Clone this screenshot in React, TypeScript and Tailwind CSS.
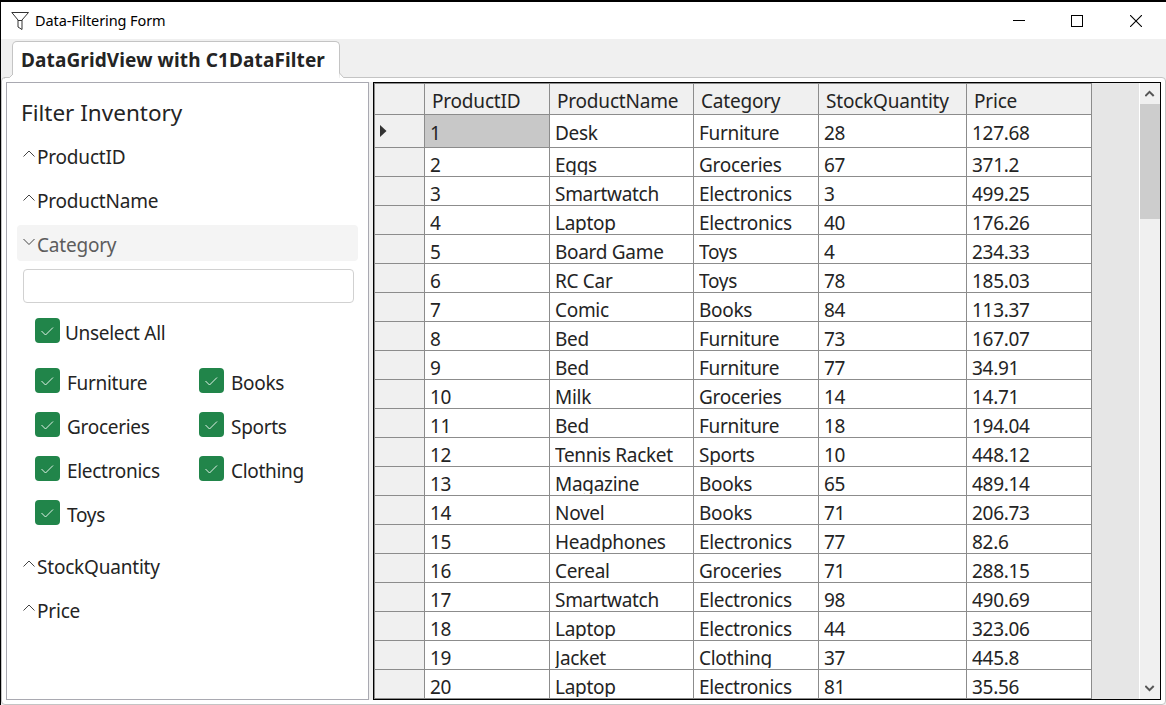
import clsx from 'clsx';

const columns = [
  { name: 'ProductID', width: 'w-[125px]' },
  { name: 'ProductName', width: 'w-[144px]' },
  { name: 'Category', width: 'w-[125px]' },
  { name: 'StockQuantity', width: 'w-[148px]' },
  { name: 'Price', width: 'w-[125px]' },
];

const products = [
  ['1', 'Desk', 'Furniture', '28', '127.68'],
  ['2', 'Eggs', 'Groceries', '67', '371.2'],
  ['3', 'Smartwatch', 'Electronics', '3', '499.25'],
  ['4', 'Laptop', 'Electronics', '40', '176.26'],
  ['5', 'Board Game', 'Toys', '4', '234.33'],
  ['6', 'RC Car', 'Toys', '78', '185.03'],
  ['7', 'Comic', 'Books', '84', '113.37'],
  ['8', 'Bed', 'Furniture', '73', '167.07'],
  ['9', 'Bed', 'Furniture', '77', '34.91'],
  ['10', 'Milk', 'Groceries', '14', '14.71'],
  ['11', 'Bed', 'Furniture', '18', '194.04'],
  ['12', 'Tennis Racket', 'Sports', '10', '448.12'],
  ['13', 'Magazine', 'Books', '65', '489.14'],
  ['14', 'Novel', 'Books', '71', '206.73'],
  ['15', 'Headphones', 'Electronics', '77', '82.6'],
  ['16', 'Cereal', 'Groceries', '71', '288.15'],
  ['17', 'Smartwatch', 'Electronics', '98', '490.69'],
  ['18', 'Laptop', 'Electronics', '44', '323.06'],
  ['19', 'Jacket', 'Clothing', '37', '445.8'],
  ['20', 'Laptop', 'Electronics', '81', '35.56'],
];

const categories = ['Furniture', 'Books', 'Groceries', 'Sports', 'Electronics', 'Clothing', 'Toys'];

function TitleBar() {
  return (
    <header className="flex h-[37px] shrink-0 items-center bg-white pl-[10px] text-black">
      <svg width="20" height="20" viewBox="0 0 20 20" fill="none" stroke="#333">
        <path d="M0.8 1.5H17.5L11 9V18.5L7 16V9Z" />
        <path d="M7 9.5H11" />
      </svg>
      <h1 className="ml-[4px] flex-1 text-[14.5px] tracking-[-0.1px]">Data-Filtering Form</h1>
      <svg width="12" height="12" viewBox="0 0 12 12" stroke="#000" shapeRendering="crispEdges">
        <path d="M0 5.5H12" />
      </svg>
      <svg className="ml-[46px]" width="12" height="12" viewBox="0 0 12 12" fill="none" stroke="#000" shapeRendering="crispEdges">
        <path d="M0.5 0.5H11.5V11.5H0.5Z" />
      </svg>
      <svg className="mr-[24px] ml-[47px]" width="12" height="12" viewBox="0 0 12 12" stroke="#000" strokeWidth="1.1">
        <path d="M0 0L12 12M12 0L0 12" />
      </svg>
    </header>
  );
}

function Chevron({ open }: { open?: boolean }) {
  return (
    <svg className="-mt-[3px]" width="12" height="8" viewBox="0 0 12 8" fill="none" stroke="#444">
      <path d={open ? 'M0.5 1L6 6.5L11.5 1' : 'M0.5 6.5L6 1L11.5 6.5'} />
    </svg>
  );
}

function FilterHeader({ label, open }: { label: string; open?: boolean }) {
  return (
    <div
      className={clsx(
        'flex h-9 items-center gap-[2px] rounded pl-[6px]',
        open ? 'bg-[#f4f4f4] text-[#5c5c5c]' : 'text-[#242424]',
      )}
    >
      <Chevron open={open} />
      <span className="pt-[4px] leading-[34px] tracking-[-0.2px]">{label}</span>
    </div>
  );
}

function Checkbox({ label, className }: { label: string; className?: string }) {
  return (
    <label className={clsx('flex h-[25px]', className)}>
      <span className="flex h-[25px] w-[25px] shrink-0 items-center justify-center rounded-[4px] bg-[#21854a]">
        <svg width="25" height="25" viewBox="0 0 25 25" fill="none" stroke="#e4f2e9">
          <path d="M6.5 13L10.5 17L18 9.5" />
        </svg>
      </span>
      <span className="pt-[3px] leading-[25px]">{label}</span>
    </label>
  );
}

function FilterPanel() {
  return (
    <aside className="w-[363px] shrink-0 border border-[#a9a9b1] bg-white px-[10px]">
      <h2 className="h-[54px] pt-[14px] pl-[4px] text-[22.5px] leading-[32px] tracking-[0px]">Filter Inventory</h2>
      <div className="flex flex-col gap-2">
        <FilterHeader label="ProductID" />
        <FilterHeader label="ProductName" />
        <FilterHeader label="Category" open />
        <div className="h-[270px] pr-[4px] pl-[6px]">
          <input className="block h-[34px] w-full rounded border border-[#d1d1d1] bg-white" />
          <Checkbox label="Unselect All" className="mt-[15px] ml-[12px] gap-[5px]" />
          <div className="mt-[25px] ml-[12px] grid grid-cols-[164px_1fr] gap-y-[19px]">
            {categories.map((category) => (
              <Checkbox key={category} label={category} className="gap-[7px]" />
            ))}
          </div>
        </div>
        <FilterHeader label="StockQuantity" />
        <FilterHeader label="Price" />
      </div>
    </aside>
  );
}

function Grid() {
  return (
    <div className="w-[718px] border-t border-l border-[#8c8c8c]">
      <div className="flex h-[31px] bg-[#f0f0f0] tracking-[-0.2px]">
        <div className="w-[50px] border-r border-b border-[#8c8c8c]" />
        {columns.map(({ name, width }) => (
          <div key={name} className={clsx('overflow-hidden border-r border-b border-[#8c8c8c] pt-[3px] pl-[7px] leading-[28px]', width)}>
            {name}
          </div>
        ))}
      </div>
      {products.map((product, row) => (
        <div key={product[0]} className={clsx('flex', row === 0 ? 'h-[33px]' : 'h-[29px]')}>
          <div className="flex w-[50px] items-center border-r border-b border-[#8c8c8c] bg-[#f0f0f0] pl-[5px]">
            {row === 0 && (
              <svg width="7" height="12" viewBox="0 0 7 12" fill="#333">
                <path d="M0 0L6.5 6L0 12Z" />
              </svg>
            )}
          </div>
          {product.map((value, i) => (
            <div
              key={columns[i].name}
              className={clsx(
                'border-r border-b border-[#8c8c8c] pl-[5px] leading-[28px]',
                columns[i].width,
                row === 0 ? 'pt-[4px]' : 'pt-[3px]',
                row === 0 && i === 0 ? 'bg-[#c8c8c8]' : 'bg-white',
              )}
            >
              {/* descenders are cut off just above the row line */}
              <div className={clsx('overflow-hidden', row === 0 ? 'h-[28px]' : 'h-[24px]')}>{value}</div>
            </div>
          ))}
        </div>
      ))}
    </div>
  );
}

function ScrollBar() {
  return (
    <div className="flex w-[21px] flex-col items-center border-l border-white bg-[#f0f0f0]">
      <svg className="h-[21px]" width="10" height="21" viewBox="0 0 10 21" fill="none" stroke="#555" strokeWidth="2">
        <path d="M0.3 13L4.5 8.8L8.7 13" />
      </svg>
      <div className="h-[115px] w-full bg-[#cdcdcd]" />
      <svg className="mt-auto" width="10" height="21" viewBox="0 0 10 21" fill="none" stroke="#555" strokeWidth="2">
        <path d="M0.3 8L4.5 12.2L8.7 8" />
      </svg>
    </div>
  );
}

export default function App() {
  return (
    <div className="flex h-[705px] w-[1166px] flex-col overflow-hidden border-t-2 border-l border-black bg-[#f0f0f0] font-['Noto_Sans',sans-serif] text-[19px] tracking-[-0.3px] text-[#242424]">
      <TitleBar />
      <div className="relative z-10 mt-[2px] ml-[11px] h-[37px] w-[328px] shrink-0 rounded-t-[5px] border border-b-0 border-[#c4c4c4] bg-white pl-[8px] text-[19px] leading-[37px] font-bold tracking-[0.12px]">
        DataGridView with C1DataFilter
        {/* flared feet of the tab */}
        <svg className="absolute -bottom-px -left-[9px]" width="9" height="6" viewBox="0 0 9 6" fill="#fff" stroke="#c4c4c4">
          <path d="M9.5 0.5L5.5 4.5H0V7H10" />
        </svg>
        <svg className="absolute -right-[6px] -bottom-px" width="6" height="6" viewBox="0 0 6 6" fill="#fff" stroke="#c4c4c4">
          <path d="M0.5 0L4.5 4.5H7V8H0" />
        </svg>
      </div>
      <main className="-mt-px flex h-[628px] shrink-0 rounded-[4px] border border-[#c4c4c4] bg-white px-[4px] pt-[4px] pb-[4px]">
        <FilterPanel />
        <div className="w-[4px] bg-[#f0f0f0]" />
        <section className="flex flex-1 border border-black bg-[#e6e6e6]">
          <Grid />
          <div className="flex-1" />
          <ScrollBar />
        </section>
      </main>
    </div>
  );
}
